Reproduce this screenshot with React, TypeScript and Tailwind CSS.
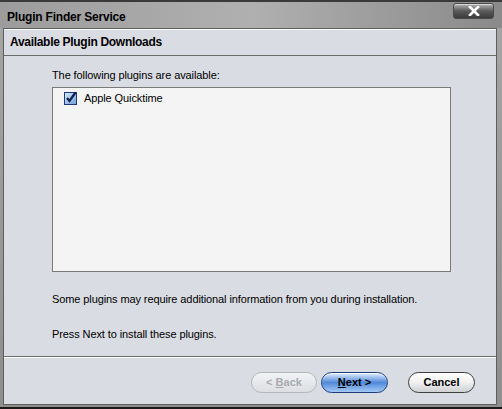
import React from 'react';

const font = { fontFamily: '"Liberation Sans", Arial, sans-serif' };

const CheckBox = () => (
    <svg width="14" height="14" viewBox="0 0 14 14">
        <defs>
            <linearGradient id="cb" x1="0" y1="0" x2="1" y2="1">
                <stop offset="0" stopColor="#dbe9fb" />
                <stop offset="1" stopColor="#6d9bd8" />
            </linearGradient>
        </defs>
        <rect x="0.5" y="1.5" width="12" height="12" fill="url(#cb)" stroke="#1c3b78" />
        <path d="M3 7 L5.5 10 L11.5 1.5" fill="none" stroke="#0d1f4a" strokeWidth="2.2" />
    </svg>
);

const CloseButton = () => (
    <div className="w-[41px] h-[16px] rounded-[3px] border border-[#4a4a4a] bg-gradient-to-b from-[#b8b8b8] via-[#5a5a5a] to-[#3c3c3c] flex items-center justify-center shadow-[inset_0_1px_0_rgba(255,255,255,0.5)]">
        <svg width="12" height="10" viewBox="0 0 12 10">
            <path d="M2 1 L10 9 M10 1 L2 9" stroke="#ffffff" strokeWidth="2.6" strokeLinecap="square" />
        </svg>
    </div>
);

export default function App() {
    return (
        <div
            className="w-[502px] h-[409px] flex flex-col bg-gradient-to-b from-[#a6a6a6] to-[#8e8e8e] border-b-[2px] border-[#1a1a1a] overflow-hidden"
            style={font}
        >
            {/* Title bar */}
            <div className="h-[28px] shrink-0 flex items-start justify-between pl-[7px] pr-[8px] border-t-[2px] border-[#3a3a3a] bg-gradient-to-r from-[#9c9c9c] via-[#b0b0b0] to-[#8a8a8a]">
                <span className="text-[12px] font-bold text-black mt-[6px] tracking-[-0.2px]">Plugin Finder Service</span>
                <div className="mt-[1px]">
                    <CloseButton />
                </div>
            </div>

            {/* Window body */}
            <div className="flex-1 ml-[3px] mr-[5px] mb-[2px] flex flex-col border border-[#5e5e5e] bg-[#d9dce3]">
                <div className="h-[27px] shrink-0 flex items-center pl-[6px] pb-[1px] border-b border-[#6b6b6b] border-t border-t-white">
                    <span className="text-[12px] font-bold text-black tracking-[-0.3px]">Available Plugin Downloads</span>
                </div>

                <div className="flex-1 flex flex-col pl-[48px] pr-[46px] pt-[12px] text-[11px] text-black tracking-[-0.1px]">
                    <p className="leading-[14px]">The following plugins are available:</p>
                    <div className="mt-[5px] h-[185px] w-[399px] border border-[#7a7a7a] bg-[#f4f4f4] px-[11px] pt-[3px]">
                        <div className="flex items-center gap-[6px]">
                            <CheckBox />
                            <span className="leading-[14px]">Apple Quicktime</span>
                        </div>
                    </div>
                    <p className="mt-[20px] leading-[14px]">Some plugins may require additional information from you during installation.</p>
                    <p className="mt-[21px] leading-[14px]">Press Next to install these plugins.</p>
                </div>

                {/* Separator */}
                <div className="h-[2px] shrink-0 border-t border-[#6e6e6e] border-b border-b-white" />

                {/* Buttons */}
                <div className="h-[46px] shrink-0 flex items-start justify-end pr-[21px] pt-[14px] text-[11px] font-bold">
                    <button className="w-[66px] h-[21px] rounded-full border border-[#b4b6ba] bg-gradient-to-b from-[#f2f3f5] to-[#dcdee2] text-[#a8aaae]">
                        &lt; <span className="underline">B</span>ack
                    </button>
                    <button className="ml-[4px] w-[67px] h-[21px] rounded-full border border-[#1d3d7c] bg-gradient-to-b from-[#e4efff] via-[#5089d8] to-[#a3c9f5] text-black shadow-[inset_0_1px_0_rgba(255,255,255,0.8)]">
                        <span className="underline">N</span>ext &gt;
                    </button>
                    <button className="ml-[20px] w-[67px] h-[21px] rounded-full border border-[#3e3e3e] bg-gradient-to-b from-[#ffffff] via-[#f0f0f0] to-[#cfd0d3] text-black">
                        Cancel
                    </button>
                </div>
            </div>
        </div>
    );
}
